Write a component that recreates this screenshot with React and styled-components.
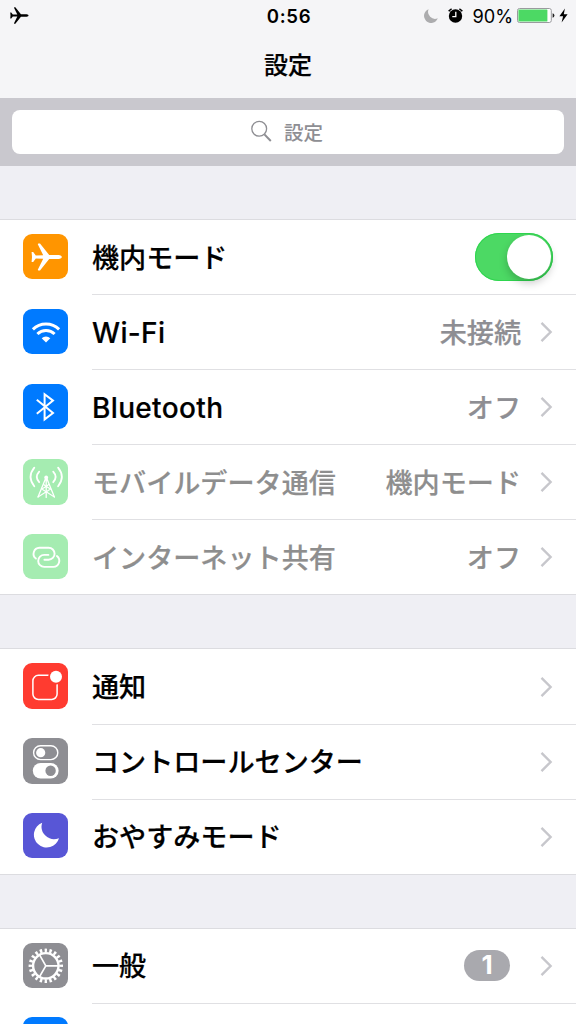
import styled, { createGlobalStyle } from "styled-components";

const App = () => {
    return (
        <Screen>
            <GlobalStyle />
            <Header>
                <StatusBar>
                    <StatusSide>
                        <PlaneGlyph width="20" height="17" color="#000" />
                    </StatusSide>
                    <Clock>0:56</Clock>
                    <StatusSide $end>
                        <StatusMoon />
                        <AlarmIcon />
                        <Percent>90%</Percent>
                        <Battery />
                        <Bolt />
                    </StatusSide>
                </StatusBar>
                <Title>設定</Title>
            </Header>
            <SearchBar>
                <SearchField>
                    <SearchIcon />
                    設定
                </SearchField>
            </SearchBar>
            {groups.map((rows, i) => (
                <Group key={i}>
                    {rows.map((row) => (
                        <SettingsRow key={row.label} {...row} />
                    ))}
                </Group>
            ))}
        </Screen>
    );
};

const SettingsRow = ({ label, latin, color, icon: Icon, value, badge, toggle, dimmed }) => (
    <Row>
        <Tile $color={color}>{Icon && <Icon />}</Tile>
        <RowBody>
            <Label $dimmed={dimmed} $latin={latin}>{label}</Label>
            {value && <Value $dimmed={dimmed}>{value}</Value>}
            {badge && <Badge>{badge}</Badge>}
            {toggle ? <Switch><Knob /></Switch> : <Chevron />}
        </RowBody>
    </Row>
);

const PlaneGlyph = ({ width, height, color }) => (
    <svg width={width} height={height} viewBox="0 0 32 28" fill={color}>
        <path d="M1.6 8.9 L3.2 8.9 L5.8 12.4 L13.2 12.2 L7.8 1.3 Q7.7 0.4 8.6 0.4 L10 0.4 L19.2 12 H28.6 Q31.8 12.3 31.8 14 Q31.8 15.7 28.6 16 H19.2 L10 27.6 L8.6 27.6 Q7.7 27.6 7.8 26.7 L13.2 15.8 L5.8 15.6 L3.2 19.1 L1.6 19.1 L2 14 Z" />
    </svg>
);

const PlaneIcon = () => (
    <PlaneGlyph width="32" height="28" color="#fff" />
);

const WifiIcon = () => (
    <svg width="45" height="45" viewBox="0 0 45 45" fill="none" stroke="#fff" strokeWidth="3">
        <path d="M9.9 20.4 A18.6 18.6 0 0 1 36.1 20.4" />
        <path d="M14.4 25 A12.3 12.3 0 0 1 31.6 25" />
        <path d="M18.7 29.2 A6.2 6.2 0 0 1 27.3 29.2 L23 33.6 Z" fill="#fff" stroke="none" />
    </svg>
);

const BluetoothIcon = () => (
    <svg width="45" height="45" viewBox="0 0 45 45" fill="none" stroke="#fff" strokeWidth="2">
        <path d="M13.8 15.8 L30 29 L21.6 35.4 V10.2 L30 16.6 L13.8 29.8" />
    </svg>
);

const CellularIcon = () => (
    <svg width="45" height="45" viewBox="0 0 45 45" fill="none" stroke="#fff" strokeWidth="1.3" strokeLinecap="round">
        <path d="M23.2 18 L15 38 M23.2 18 L31.4 38 M23.2 18 V38.4" />
        <path d="M20.7 25.5 L23.2 27.5 L25.7 25.5 M18.8 30 L23.2 27.5 L27.6 30 M15 38 L27.6 30 M31.4 38 L18.8 30" strokeWidth="1.1" />
        <circle cx="23.2" cy="18.4" r="1.9" fill="#fff" stroke="none" />
        <path d="M16.2 12.6 Q11.4 17.8 16.2 23.2 M30.2 12.6 Q35 17.8 30.2 23.2" strokeWidth="1.8" />
        <path d="M11.3 8.6 Q3.8 17.8 11.3 27.2 M35.1 8.6 Q42.6 17.8 35.1 27.2" strokeWidth="1.8" />
    </svg>
);

const HotspotIcon = () => (
    <svg width="45" height="45" viewBox="0 0 45 45" fill="none" stroke="#fff" strokeWidth="1.9" strokeLinecap="round">
        <path d={LINK} />
        <path d={LINK} transform="rotate(180 23.4 23.3)" />
    </svg>
);

const LINK = "M12.9 24.6 A6.1 6.1 0 0 1 16.4 13.7 H25.6 A6 6 0 0 1 25.6 25.7 H21.4";

const NotificationIcon = () => (
    <svg width="45" height="45" viewBox="0 0 45 45" fill="none">
        <rect x="9.9" y="11.3" width="24.2" height="24.2" rx="5.5" stroke="#fff" strokeWidth="1.5" />
        <circle cx="33" cy="12.8" r="7.8" fill="#ff3b30" />
        <circle cx="33" cy="12.8" r="6" fill="#fff" />
    </svg>
);

const ControlIcon = () => (
    <svg width="45" height="45" viewBox="0 0 45 45" fill="none">
        <rect x="10.6" y="6.8" width="24.2" height="13.8" rx="6.9" stroke="#fff" strokeWidth="1.4" />
        <circle cx="17.7" cy="13.7" r="4.6" fill="#fff" />
        <rect x="9.8" y="24" width="25.8" height="15.6" rx="7.8" fill="#fff" />
        <circle cx="27.6" cy="31.8" r="5.2" fill="#8e8e93" />
    </svg>
);

const MoonIcon = () => (
    <svg width="45" height="45" viewBox="0 0 45 45" fill="#fff">
        <path d="M19.2 9.7 A12.8 12.8 0 1 0 36 25.2 A12.6 12.6 0 0 1 19.2 9.7 Z" />
    </svg>
);

const GearIcon = () => (
    <svg width="45" height="45" viewBox="0 0 45 45" fill="none" stroke="#fff">
        <circle cx="22.8" cy="22.8" r="12.7" strokeWidth="2.4" />
        <circle cx="22.8" cy="22.8" r="15.3" strokeWidth="3.8" pathLength="80" strokeDasharray="2 2" strokeDashoffset="1" />
        <path d="M22.8 22.8 H35 M22.8 22.8 L16.7 12.2 M22.8 22.8 L16.7 33.4" strokeWidth="1.7" />
    </svg>
);

const StatusMoon = () => (
    <svg width="14" height="14" viewBox="0 0 14 14" fill="#acacae">
        <path d="M4.6 0.2 A7.1 7.1 0 1 0 13.8 9.3 A7 7 0 0 1 4.6 0.2 Z" />
    </svg>
);

const AlarmIcon = () => (
    <svg width="15" height="15" viewBox="0 0 15 15" fill="none" stroke="#000">
        <circle cx="7.5" cy="8" r="6.7" fill="#000" stroke="none" />
        <path d="M0.7 3.3 A9 9 0 0 1 3.6 0.9 M14.3 3.3 A9 9 0 0 0 11.4 0.9" strokeWidth="1.6" />
        <path d="M7.8 3.8 V8.6 H4.3" stroke="#fff" strokeWidth="1.3" />
    </svg>
);

const Battery = () => (
    <svg width="38" height="15" viewBox="0 0 38 15">
        <rect x="0.5" y="0.5" width="33.8" height="14" rx="2" fill="#fff" stroke="#9a9a9e" />
        <rect x="1.4" y="1.5" width="29" height="12" rx="0.6" fill="#4cd964" />
        <path d="M35.6 5.2 Q37.4 5.6 37.4 7.5 Q37.4 9.4 35.6 9.8 Z" fill="#222" />
    </svg>
);

const Bolt = () => (
    <svg width="9" height="15" viewBox="0 0 9 15">
        <path d="M5.9 0.4 L0.4 8.3 H4.1 L2.6 14.6 L8.6 6.2 H4.8 Z" fill="#000" />
    </svg>
);

const SearchIcon = () => (
    <svg width="21" height="22" viewBox="0 0 21 22" fill="none" stroke="#8e8e93">
        <circle cx="8.2" cy="8.8" r="7.4" strokeWidth="1.3" />
        <path d="M13.4 14.4 L19.8 21" strokeWidth="2" />
    </svg>
);

const Chevron = () => (
    <svg width="13" height="20" viewBox="0 0 13 20" fill="none">
        <path d="M1.5 0.9 L10.6 10 L1.5 19.1" stroke="#c7c7cc" strokeWidth="2.4" />
    </svg>
);

const groups = [
    [
        { label: "機内モード", color: "#ff9500", icon: PlaneIcon, toggle: true },
        { label: "Wi-Fi", latin: true, color: "#007aff", icon: WifiIcon, value: "未接続" },
        { label: "Bluetooth", latin: true, color: "#007aff", icon: BluetoothIcon, value: "オフ" },
        { label: "モバイルデータ通信", color: "#a5ecb1", icon: CellularIcon, value: "機内モード", dimmed: true },
        { label: "インターネット共有", color: "#a5ecb1", icon: HotspotIcon, value: "オフ", dimmed: true },
    ],
    [
        { label: "通知", color: "#ff3b30", icon: NotificationIcon },
        { label: "コントロールセンター", color: "#8e8e93", icon: ControlIcon },
        { label: "おやすみモード", color: "#5856d6", icon: MoonIcon },
    ],
    [
        { label: "一般", color: "#8e8e93", icon: GearIcon, badge: "1" },
        { label: "", color: "#007aff" },
    ],
];

const GlobalStyle = createGlobalStyle`
    * {
        box-sizing: border-box;
    }

    body {
        margin: 0;
        overflow: hidden;
        background: #efeff4;
        font-family: Inter, "Noto Sans CJK JP", sans-serif;
    }

    svg {
        display: block;
        flex-shrink: 0;
    }
`;

const Screen = styled.main`
    width: 576px;
    height: 1024px;
    overflow: hidden;
    background: #efeff4;
`;

const Header = styled.header`
    height: 98px;
    background: #f5f5f7;
`;

const StatusBar = styled.div`
    display: grid;
    grid-template-columns: 1fr auto 1fr;
    align-items: center;
    height: 32px;
    padding: 0 8px 0 9px;
`;

const StatusSide = styled.div`
    display: flex;
    align-items: center;
    justify-content: ${(props) => (props.$end ? "flex-end" : "flex-start")};
    margin-top: -1px;

    svg + svg {
        margin-left: 10px;
    }

    svg:last-child:not(:first-child) {
        margin-left: 4px;
    }
`;

const Clock = styled.span`
    padding-left: 1px;
    font-size: 18.6px;
    font-weight: 600;
    line-height: 32px;
    letter-spacing: 0.7px;
`;

const Percent = styled.span`
    padding-top: 1px;
    margin: 0 4px 0 9px;
    font-size: 18.2px;
    line-height: 31px;
`;

const Title = styled.h1`
    margin: 15px 0 0;
    font-size: 24px;
    font-weight: 500;
    line-height: 38px;
    text-align: center;
    -webkit-text-stroke: 0.2px;
`;

const SearchBar = styled.div`
    height: 68px;
    padding: 12px 12px 0;
    background: #c9c8ce;
`;

const SearchField = styled.div`
    display: flex;
    align-items: center;
    justify-content: center;
    gap: 12px;
    height: 43.5px;
    padding: 0 2px 1px 0;
    border-radius: 8px;
    background: #fff;
    color: #8e8e93;
    font-size: 19.5px;
    font-weight: 500;
`;

const Group = styled.section`
    margin-top: 53px;
    border-top: 1px solid #dcdce0;
    background: #fff;
`;

const RowBody = styled.div`
    display: flex;
    flex: 1;
    align-items: center;
    height: 100%;
    margin-left: 23.6px;
    padding-right: 23px;
    border-bottom: 1px solid #e0e0e3;
`;

const Row = styled.div`
    display: flex;
    align-items: center;
    height: 75.1px;
    padding-left: 23px;

    &:last-child {
        border-bottom: 1px solid #dcdce0;
    }

    &:last-child ${RowBody} {
        border-bottom: 0;
    }
`;

const Tile = styled.div`
    display: flex;
    flex-shrink: 0;
    align-items: center;
    justify-content: center;
    width: 45.4px;
    height: 45.4px;
    margin-top: -2px;
    border-radius: 9px;
    background: ${(props) => props.$color};
`;

const Label = styled.span`
    flex: 1;
    padding-top: ${(props) => (props.$latin ? "2px" : "3px")};
    color: ${(props) => (props.$dimmed ? "#8e8e8e" : "#000")};
    font-size: ${(props) => (props.$latin ? "28px" : "27.1px")};
    font-weight: 500;
    letter-spacing: ${(props) => (props.$latin ? "0.35px" : "0")};
    line-height: 40px;
    white-space: nowrap;
    -webkit-text-stroke: 0.2px;
`;

const Value = styled.span`
    padding-top: 3px;
    margin-right: 19px;
    color: ${(props) => (props.$dimmed ? "#8e8e8e" : "#8e8e93")};
    font-size: 27.1px;
    font-weight: 500;
    line-height: 40px;
    -webkit-text-stroke: 0.2px;
`;

const Badge = styled.span`
    width: 46px;
    height: 31px;
    margin-right: 30px;
    border-radius: 16px;
    background: #a9a9ae;
    color: #fff;
    font-size: 26px;
    font-weight: 700;
    line-height: 29px;
    text-align: center;
`;

const Switch = styled.div`
    display: flex;
    justify-content: flex-end;
    width: 78px;
    height: 48px;
    padding: 2px;
    border-radius: 24px;
    background: #4cd964;
    box-shadow: inset 0 0 0 1px #2fd64f;
`;

const Knob = styled.div`
    width: 44px;
    height: 44px;
    border-radius: 50%;
    background: #fff;
    box-shadow: 0 4px 9px rgba(0, 0, 0, 0.22);
`;

export default App;
